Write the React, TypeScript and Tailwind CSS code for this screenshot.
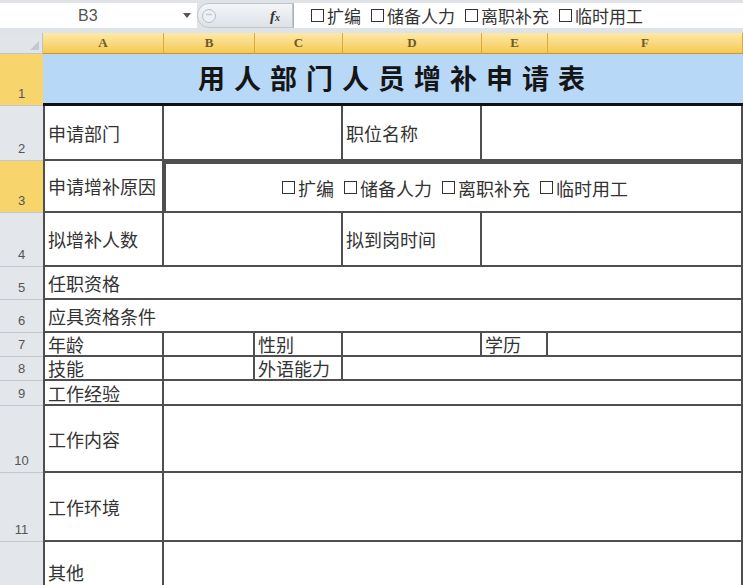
import React from "react";

const cjk = "font-['Noto_Sans_CJK_SC','Noto_Sans',sans-serif]";
const line = "border-[#4f4f4f]";

const RowHead = ({ n, active }: { n: number; active?: boolean }) => (
  <div
    className={`flex items-end justify-center pb-[2px] border-b border-[#c3c8cf] font-['Liberation_Sans',sans-serif] text-[13px] text-[#555] ${
      active ? "bg-[#f8d56c]" : "bg-[#e3e6eb]"
    }`}
  >
    {n}
  </div>
);

const ColHead = ({ label }: { label: string }) => (
  <div className="flex items-center justify-center bg-gradient-to-b from-[#fdeaa8] to-[#f6c84e] border-r border-[#d9ab3d] border-b border-b-[#c9962c] font-['Liberation_Serif',serif] text-[13px] font-bold text-[#6d5b26]">
    {label}
  </div>
);

const Cell = ({
  children,
  className = "",
}: {
  children?: React.ReactNode;
  className?: string;
}) => (
  <div
    className={`flex items-center pl-[3px] border-b-2 border-r-2 ${line} bg-white text-[18px] leading-[18px] text-[#333] whitespace-nowrap ${cjk} ${className}`}
  >
    {children}
  </div>
);

// checkbox square drawn as a small box before each option
const Opt = ({ label }: { label: string }) => (
  <span className="flex items-center">
    <span className="inline-block w-[13px] h-[13px] border-[1.5px] border-[#333] mr-[3px]" />
    {label}
  </span>
);

const Options = () => (
  <span className="flex gap-[10px]">
    <Opt label="扩编" />
    <Opt label="储备人力" />
    <Opt label="离职补充" />
    <Opt label="临时用工" />
  </span>
);

export default function App() {
  return (
    <div className="w-[743px] h-[585px] overflow-hidden bg-white">
      {/* formula bar */}
      <div className="h-[33px] bg-[#dfe3e8] pt-[3px] flex">
        <div className="w-[197px] h-[25px] bg-white flex items-center relative">
          <span className="absolute left-[78px] font-['Liberation_Sans',sans-serif] text-[16px] text-[#555]">
            B3
          </span>
          <svg className="absolute left-[183px] top-[10px]" width="8" height="5" viewBox="0 0 8 5">
            <path d="M0 0h8L4 5z" fill="#555" />
          </svg>
        </div>
        <div className="w-[96px] h-[25px] bg-gradient-to-b from-[#f4f6f8] to-[#dde2e8] rounded-l-[12px] border border-[#bfc6cf] flex items-center relative">
          <svg className="absolute left-[3px] top-[4px]" width="16" height="16" viewBox="0 0 16 16">
            <circle cx="8" cy="8" r="6.5" fill="#eef1f4" stroke="#b7bec8" />
            <path d="M5 6.5h6" stroke="#c5cbd3" strokeWidth="1.5" />
          </svg>
          <span className="absolute left-[72px] top-[1px] font-['Liberation_Serif',serif] italic font-bold text-[15px] text-[#333]">
            f<span className="text-[10px]">x</span>
          </span>
        </div>
        <div className={`flex-1 h-[25px] bg-white border-l border-[#aab2bd] flex items-center pl-[17px] text-[17px] leading-[18px] text-[#333] ${cjk}`}>
          <Options />
        </div>
      </div>

      {/* sheet */}
      <div className="grid grid-cols-[43px_121px_91px_88px_139px_66px_195px] grid-rows-[21px_52px_55px_52px_54px_33px_33px_24px_24px_25px_67px_69px_62px]">
        <div className="bg-[#e1e5ea] border-r border-b border-[#bcc3cc] relative">
          <svg className="absolute right-[3px] bottom-[3px]" width="9" height="9" viewBox="0 0 9 9">
            <path d="M9 0v9H0z" fill="#c2c8d0" />
          </svg>
        </div>
        {["A", "B", "C", "D", "E", "F"].map((c) => (
          <ColHead key={c} label={c} />
        ))}

        {/* row 1 */}
        <RowHead n={1} active />
        <div className="col-span-6 bg-[#b8d8f8] border-b-[3px] border-[#111] flex items-center justify-center">
          <span className={`text-[27px] font-bold tracking-[9px] pl-[6px] text-[#151515] ${cjk}`}>
            用人部门人员增补申请表
          </span>
        </div>

        {/* row 2 */}
        <RowHead n={2} />
        <Cell className="border-l-2">申请部门</Cell>
        <Cell className="col-span-2" />
        <Cell>职位名称</Cell>
        <Cell className="col-span-2" />

        {/* row 3 */}
        <RowHead n={3} active />
        <Cell className="border-l-2">申请增补原因</Cell>
        <Cell className="col-span-5 justify-center border-2 border-t-[3px] border-[#3a3a3a] pl-0">
          <Options />
        </Cell>

        {/* row 4 */}
        <RowHead n={4} />
        <Cell className="border-l-2">拟增补人数</Cell>
        <Cell className="col-span-2" />
        <Cell>拟到岗时间</Cell>
        <Cell className="col-span-2" />

        {/* row 5-6 */}
        <RowHead n={5} />
        <Cell className="col-span-6 border-l-2">任职资格</Cell>
        <RowHead n={6} />
        <Cell className="col-span-6 border-l-2">应具资格条件</Cell>

        {/* row 7 */}
        <RowHead n={7} />
        <Cell className="border-l-2 text-[17px]">年龄</Cell>
        <Cell />
        <Cell className="text-[17px]">性别</Cell>
        <Cell />
        <Cell className="text-[17px]">学历</Cell>
        <Cell />

        {/* row 8 */}
        <RowHead n={8} />
        <Cell className="border-l-2 text-[17px]">技能</Cell>
        <Cell />
        <Cell className="text-[17px]">外语能力</Cell>
        <Cell className="col-span-3" />

        {/* row 9-12 */}
        <RowHead n={9} />
        <Cell className="border-l-2">工作经验</Cell>
        <Cell className="col-span-5" />
        <RowHead n={10} />
        <Cell className="border-l-2">工作内容</Cell>
        <Cell className="col-span-5" />
        <RowHead n={11} />
        <Cell className="border-l-2">工作环境</Cell>
        <Cell className="col-span-5" />
        <RowHead n={12} />
        <Cell className="border-l-2">其他</Cell>
        <Cell className="col-span-5" />
      </div>
    </div>
  );
}
